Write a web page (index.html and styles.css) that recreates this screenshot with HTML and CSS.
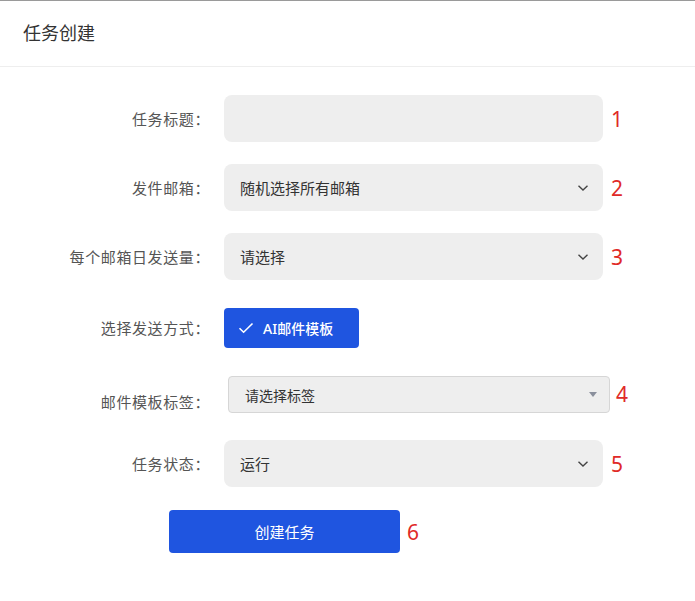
FILE: index.html
```html
<!DOCTYPE html>
<html lang="zh-CN">
<head>
<meta charset="utf-8">
<title>任务创建</title>
<link rel="stylesheet" href="styles.css">
</head>
<body>
<div class="panel">
  <header class="panel-header">任务创建</header>
  <form class="form">
    <div class="row">
      <label class="label">任务标题：</label>
      <div class="field"></div>
      <span class="num">1</span>
    </div>
    <div class="row">
      <label class="label">发件邮箱：</label>
      <div class="field select"><span>随机选择所有邮箱</span>
        <svg class="chev" width="12" height="8" viewBox="0 0 12 8"><polyline points="1.5,1.8 6,6 10.5,1.8" fill="none" stroke="#444" stroke-width="1.4"/></svg>
      </div>
      <span class="num">2</span>
    </div>
    <div class="row">
      <label class="label">每个邮箱日发送量：</label>
      <div class="field select"><span>请选择</span>
        <svg class="chev" width="12" height="8" viewBox="0 0 12 8"><polyline points="1.5,1.8 6,6 10.5,1.8" fill="none" stroke="#444" stroke-width="1.4"/></svg>
      </div>
      <span class="num">3</span>
    </div>
    <div class="row row-method">
      <label class="label">选择发送方式：</label>
      <div class="ctrl">
        <button type="button" class="btn-mode">
          <svg width="16" height="12" viewBox="0 0 16 12"><polyline points="1.5,6.2 5.6,10.2 14.5,1.5" fill="none" stroke="#fff" stroke-width="1.6"/></svg>
          <span>AI邮件模板</span>
        </button>
      </div>
    </div>
    <div class="row row-tag">
      <label class="label label-low">邮件模板标签：</label>
      <div class="tag-select"><span>请选择标签</span><span class="tri"></span></div>
      <span class="num">4</span>
    </div>
    <div class="row row-status">
      <label class="label">任务状态：</label>
      <div class="field select"><span>运行</span>
        <svg class="chev" width="12" height="8" viewBox="0 0 12 8"><polyline points="1.5,1.8 6,6 10.5,1.8" fill="none" stroke="#444" stroke-width="1.4"/></svg>
      </div>
      <span class="num">5</span>
    </div>
    <div class="submit-row">
      <button type="button" class="btn-submit">创建任务</button>
      <span class="num">6</span>
    </div>
  </form>
</div>
</body>
</html>
```
FILE: styles.css
```css
html, body {
  margin: 0;
  padding: 0;
  background: #fff;
}
body {
  font-family: "Noto Sans", "Noto Sans CJK SC", sans-serif;
  color: #333;
}
.panel {
  border-top: 1px solid #9a9a9a;
  min-height: 600px;
}
.panel-header {
  height: 66px;
  box-sizing: border-box;
  padding: 19px 23px 0;
  line-height: 24px;
  font-size: 18px;
  color: #333;
  border-bottom: 1px solid #eeeeee;
  font-family: "Noto Sans CJK SC", sans-serif;
}
.form {
  display: flex;
  flex-direction: column;
  padding-top: 28px;
}
.row {
  display: grid;
  grid-template-columns: 210px 379px auto;
  column-gap: 14px;
  align-items: center;
}
.row + .row { margin-top: 22px; }
.row.row-method { margin-top: 28px; }
.row.row-tag { margin-top: 28px; align-items: start; }
.row.row-status { margin-top: 27px; }
.label {
  text-align: right;
  font-size: 15px;
  letter-spacing: 0.6px;
  color: #555;
  font-family: "Noto Sans CJK SC", sans-serif;
  line-height: 20px;
}
.label-low { padding-top: 16px; }
.field {
  height: 47px;
  background: #eeeeee;
  border-radius: 8px;
  box-sizing: border-box;
  padding: 0 14px 0 16px;
  display: flex;
  align-items: center;
  font-size: 15px;
  color: #333;
  font-family: "Noto Sans CJK SC", sans-serif;
}
.select { justify-content: space-between; }
.num {
  color: #e02a27;
  font-size: 21px;
  font-family: "Noto Sans", sans-serif;
  line-height: 24px;
  margin-left: -6px;
}
.ctrl { display: flex; }
.btn-mode {
  height: 40px;
  width: 135px;
  border: none;
  border-radius: 4px;
  background: #1f55e0;
  color: #fff;
  display: flex;
  align-items: center;
  gap: 9px;
  padding: 0 0 0 14px;
  font-size: 14px;
  font-weight: 500;
  font-family: "Noto Sans", "Noto Sans CJK SC", sans-serif;
}
.tag-select {
  margin-left: 4px;
  width: 382px;
  height: 37px;
  box-sizing: border-box;
  border: 1px solid #d6d6d6;
  border-radius: 4px;
  background: #eeeeee;
  display: flex;
  align-items: center;
  justify-content: space-between;
  padding: 0 12px 0 16px;
  font-size: 14px;
  color: #333;
  font-family: "Noto Sans CJK SC", sans-serif;
}
.tri {
  width: 0;
  height: 0;
  border-left: 4px solid transparent;
  border-right: 4px solid transparent;
  border-top: 5px solid #8a8f9c;
}
.row-tag .num { margin-left: -1px; padding-top: 6px; }
.submit-row {
  display: flex;
  align-items: center;
  gap: 7px;
  padding-left: 169px;
  margin-top: 23px;
}
.btn-submit {
  width: 231px;
  height: 43px;
  border: none;
  border-radius: 4px;
  background: #1f55e0;
  color: #fff;
  font-size: 15px;
  font-family: "Noto Sans CJK SC", sans-serif;
}
.submit-row .num { margin-left: 0; }
```
